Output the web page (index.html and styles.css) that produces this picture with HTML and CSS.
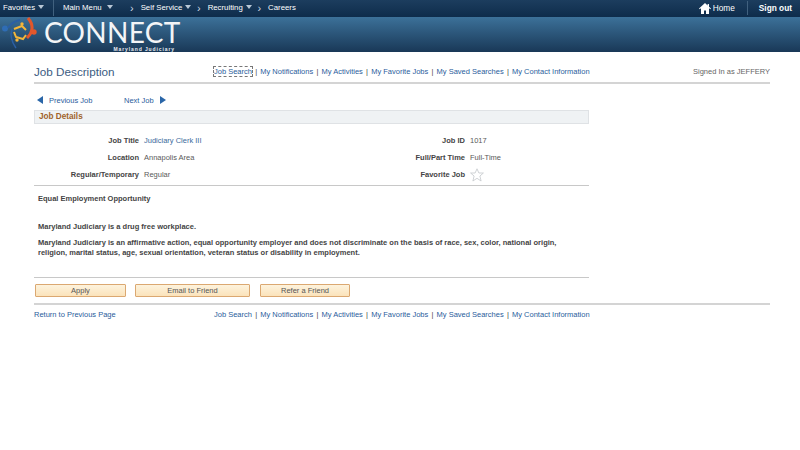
FILE: index.html
```html
<!DOCTYPE html>
<html lang="en">
<head>
    <meta charset="UTF-8">
    <title>Job Description</title>
    <link rel="stylesheet" href="styles.css">
</head>
<body>

    <div class="topbar">
        <div class="crumbs">
            <span class="crumb fav">Favorites <i class="caret"></i></span>
            <span class="crumb main">Main Menu <i class="caret"></i></span>
            <span class="sep sep-first">&#8250;</span>
            <span class="crumb">Self Service <i class="caret small"></i></span>
            <span class="sep">&#8250;</span>
            <span class="crumb">Recruiting <i class="caret small"></i></span>
            <span class="sep">&#8250;</span>
            <span class="crumb">Careers</span>
        </div>
        <div class="top-links">
            <svg class="home-icon" width="12" height="11" viewBox="0 0 12 11"><path fill="#fff" d="M6 0 0 5.6 .7 6.3 2 5.2V11H5V7.4H7V11H10V5.2L11.3 6.3 12 5.6 10 3.7V1H8.6V2.4Z"/></svg>
            <span class="home">Home</span>
            <span class="signout">Sign out</span>
        </div>
    </div>

    <div class="banner">
        <svg class="logo" width="42" height="35" viewBox="0 0 42 35">
            <circle cx="4" cy="11.5" r="3" fill="#2f6db5"/>
            <path d="M7 11C10 6 14 4 19 3" stroke="#2a5fa5" stroke-width="2" fill="none"/>
            <path d="M15 31C10 24 9 18 11 12" stroke="#2a5fa5" stroke-width="1.5" fill="none"/>
            <circle cx="21" cy="7" r="1.7" fill="#f4b63a"/>
            <path d="M13 12 21 9 25 13" stroke="#f4b63a" stroke-width="2" fill="none"/>
            <circle cx="16" cy="23" r="1.7" fill="#f4b63a"/>
            <path d="M13 15 15 20 22 22 25 18" stroke="#f4b63a" stroke-width="2" fill="none"/>
            <path d="M27 1C32 7 33 14 26 21" stroke="#e2572b" stroke-width="3" fill="none"/>
            <circle cx="33" cy="15" r="2.7" fill="#e2572b"/>
        </svg>
        <div class="brand">
            <span class="brand-name">CONNECT</span>
            <span class="brand-sub">Maryland Judiciary</span>
        </div>
    </div>

    <div class="page">
        <div class="title-row">
            <h1>Job Description</h1>
            <div class="links">
                <a class="focused">Job Search</a><b>|</b><a>My Notifications</a><b>|</b><a>My Activities</a><b>|</b><a>My Favorite Jobs</a><b>|</b><a>My Saved Searches</a><b>|</b><a>My Contact Information</a>
            </div>
            <div class="signed">Signed In as JEFFERY</div>
        </div>

        <div class="content">
            <div class="pager">
                <span class="arrow left"></span><a class="prev">Previous Job</a>
                <a class="next">Next Job</a><span class="arrow right"></span>
            </div>

            <div class="section-head">Job Details</div>

            <div class="details">
                <div class="label">Job Title</div><div class="value link">Judiciary Clerk III</div>
                <div class="label">Job ID</div><div class="value">1017</div>
                <div class="label">Location</div><div class="value">Annapolis Area</div>
                <div class="label">Full/Part Time</div><div class="value">Full-Time</div>
                <div class="label">Regular/Temporary</div><div class="value">Regular</div>
                <div class="label">Favorite Job</div>
                <div class="value"><svg class="star" width="14" height="14" viewBox="0 0 14 14"><path fill="#fff" stroke="#c4c8cc" stroke-width=".8" d="M7 .8 8.9 5H13.4L9.9 8 11.1 13 7 10.3 2.9 13 4.1 8 .6 5H5.1Z"/></svg></div>
            </div>

            <div class="description">
                <p class="eeo">Equal Employment Opportunity</p>
                <p class="free">Maryland Judiciary is a drug free workplace.</p>
                <p>Maryland Judiciary is an affirmative action, equal opportunity employer and does not discriminate on the basis of race, sex, color, national origin, religion, marital status, age, sexual orientation, veteran status or disability in employment.</p>
            </div>

            <div class="buttons">
                <button class="apply">Apply</button>
                <button class="email">Email to Friend</button>
                <button class="refer">Refer a Friend</button>
            </div>
        </div>

        <div class="footer-row">
            <a class="back">Return to Previous Page</a>
            <div class="links">
                <a>Job Search</a><b>|</b><a>My Notifications</a><b>|</b><a>My Activities</a><b>|</b><a>My Favorite Jobs</a><b>|</b><a>My Saved Searches</a><b>|</b><a>My Contact Information</a>
            </div>
        </div>
    </div>

</body>
</html>
```

FILE: styles.css
```css
body {
    margin: 0;
    height: 450px;
    overflow: hidden;
    background: #fff;
    font-family: "Liberation Sans", Arial, sans-serif;
    font-size: 7.5px;
    color: #444;
}
a {
    color: #2a5d9c;
}
.topbar {
    height: 17px;
    background: linear-gradient(#1c3d5e, #0e2c4b);
    color: #fff;
    display: flex;
    justify-content: space-between;
    align-items: center;
    font-size: 7.8px;
    padding: 0 8px 2px 3px;
    box-sizing: border-box;
}
.crumbs, .top-links {
    display: flex;
    align-items: center;
}
.top-links {
    padding-top: 1px;
}
.crumb {
    white-space: nowrap;
}
.fav {
    width: 50px;
    border-right: 1px solid #41617f;
    line-height: 17px;
    margin-right: 9px;
}
.main {
    width: 67px;
}
.caret {
    display: inline-block;
    width: 0;
    height: 0;
    margin: 0 0 1px 3px;
    border: 3.5px solid transparent;
    border-top: 4px solid #b9c7d6;
    border-bottom: 0;
}
.fav .caret {
    margin-left: 1px;
}
.caret.small {
    margin-left: 1px;
    border-width: 3px;
    border-top-width: 4px;
    border-bottom: 0;
}
.sep {
    margin: 0 7px 0 5.5px;
    color: #cfd9e3;
    font-size: 11px;
    line-height: 10px;
}
.sep-first {
    margin-left: 0;
    margin-right: 7px;
}
.home-icon {
    margin-right: 2px;
}
.home {
    font-size: 8.3px;
    padding-right: 12px;
    border-right: 1px solid #41617f;
    line-height: 14px;
}
.signout {
    font-size: 8.3px;
    font-weight: bold;
    margin-left: 11px;
}
.banner {
    height: 35px;
    background: linear-gradient(#3c7199, #193857);
    display: flex;
}
.logo {
    flex: none;
    margin-left: 1px;
}
.brand {
    margin-left: 1px;
    color: #f3f5f7;
    width: 136px;
    display: flex;
    flex-direction: column;
}
.brand-name {
    font-family: Lato, sans-serif;
    font-size: 28px;
    line-height: 24px;
    margin-top: 3px;
    letter-spacing: .3px;
    white-space: nowrap;
}
.brand-sub {
    font-size: 5px;
    font-weight: bold;
    letter-spacing: .9px;
    line-height: 6px;
    margin-top: 2px;
    text-align: right;
    padding-right: 5px;
    color: #e8edf2;
}
.page {
    padding: 0 30px 0 34px;
}
.title-row {
    height: 30px;
    border-bottom: 2px solid #d4d4d4;
    display: flex;
    align-items: center;
    position: relative;
}
h1 {
    margin: 8px 0 0;
    width: 180px;
    font-size: 11.7px;
    font-weight: normal;
    color: #3b5c82;
}
.links {
    display: flex;
    align-items: center;
    white-space: nowrap;
}
.title-row .links {
    margin-top: 9px;
}
.links b {
    font-weight: normal;
    color: #444;
    margin: 0 3.2px;
}
.focused {
    outline: 1px dashed #777;
    outline-offset: 0;
}
.signed {
    margin: 9px 0 0 auto;
    color: #666;
}
.content {
    width: 555px;
}
.pager {
    display: flex;
    align-items: center;
    height: 12px;
    margin-top: 10px;
    padding-left: 3px;
}
.arrow {
    width: 0;
    height: 0;
    border-top: 4.5px solid transparent;
    border-bottom: 4.5px solid transparent;
}
.arrow.left {
    border-right: 6px solid #2a66a8;
}
.arrow.right {
    border-left: 6px solid #2a66a8;
    margin-left: 6px;
}
.prev {
    margin-left: 6px;
    width: 75px;
}
.section-head {
    margin-top: 4px;
    height: 14px;
    line-height: 12px;
    box-sizing: border-box;
    padding-left: 4px;
    background: #eff2f4;
    border: 1px solid #dfe2e5;
    font-weight: bold;
    font-size: 8.2px;
    color: #a0622a;
}
.details {
    display: grid;
    grid-template-columns: 105px 171px 145px 1fr;
    column-gap: 5px;
    grid-auto-rows: 17px;
    align-items: center;
    margin-top: 8px;
    padding-bottom: 2px;
    border-bottom: 1px solid #c8c8c8;
}
.label {
    text-align: right;
    font-weight: bold;
    color: #444;
}
.value {
    color: #5a5a5a;
}
.value.link {
    color: #3a6a9c;
}
.star {
    display: block;
}
.description {
    font-weight: bold;
    padding: 8px 25px 0 4px;
    color: #444;
    line-height: 10px;
    height: 83px;
    border-bottom: 1px solid #c8c8c8;
}
.description p {
    margin: 0 0 6px;
}
.description .eeo {
    margin-bottom: 18px;
}
.buttons {
    display: flex;
    padding: 6px 0 0 1px;
}
button {
    height: 13px;
    padding: 0;
    background: linear-gradient(#fdf3dd, #fbe3bb);
    border: 1px solid #dba871;
    border-radius: 1px;
    font-family: inherit;
    font-size: 7.5px;
    color: #555;
}
.apply {
    width: 91px;
    margin-right: 9px;
}
.email {
    width: 115px;
    margin-right: 10px;
}
.refer {
    width: 90px;
}
.footer-row {
    margin-top: 6px;
    border-top: 2px solid #d4d4d4;
    padding-top: 5px;
    display: flex;
}
.back {
    width: 180px;
}
```
